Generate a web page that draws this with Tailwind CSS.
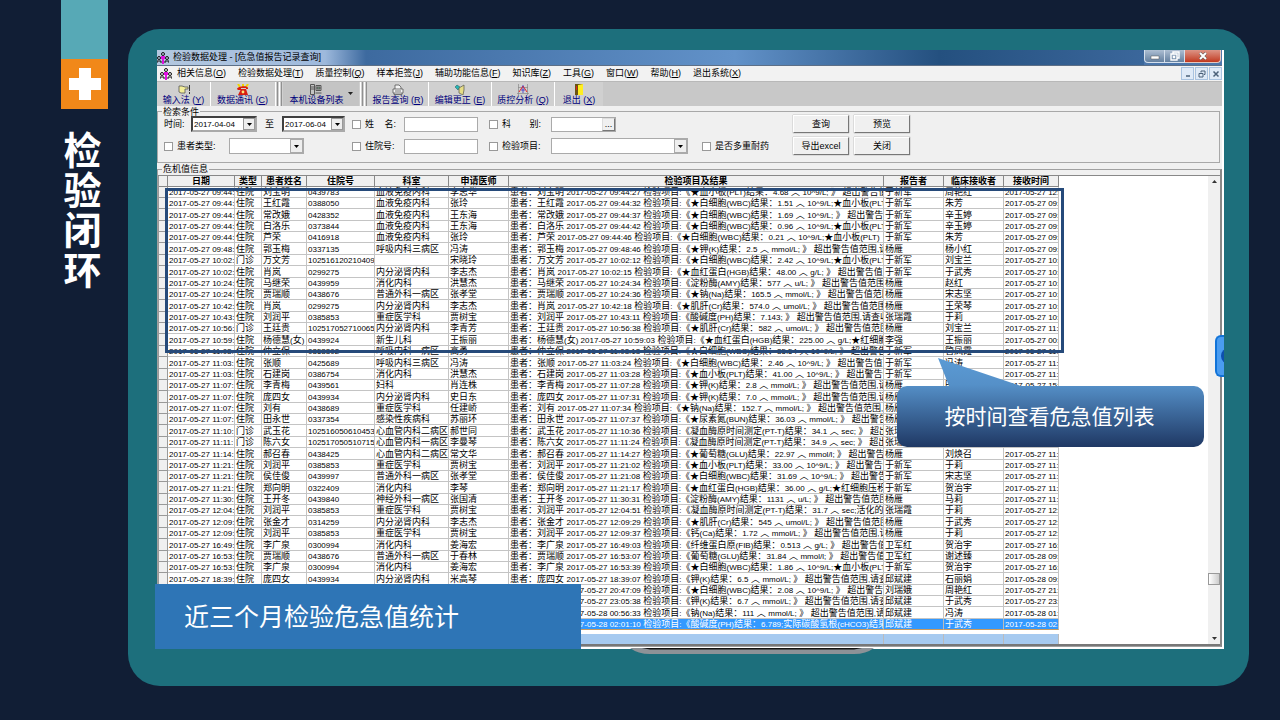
<!DOCTYPE html>
<html lang="zh-CN">
<head>
<meta charset="utf-8">
<title>检验闭环</title>
<script src="https://cdn.jsdelivr.net/npm/@tailwindcss/browser@4"></script>
</head>
<body class="flex min-h-screen bg-[#111e35] font-['Liberation_Sans','Noto_Sans_CJK_SC',sans-serif] text-[9px] leading-[11px] text-black">
<aside class="flex w-32 shrink-0 flex-col items-center pl-[41px]">
  <div class="h-[59px] w-[47px] bg-[#57a9b6]"></div>
  <div class="flex h-[50px] w-[47px] items-center justify-center bg-[#f18819]">
    <svg class="h-8 w-8" viewBox="0 0 32 32" fill="#fff"><path d="M10 0h12v10h10v12H22v10H10V22H0V10h10z"/></svg>
  </div>
  <h1 class="mt-[19px] w-10 -ml-1 text-center font-['Noto_Sans_CJK_SC',sans-serif] text-[38px] leading-10 font-bold text-white">检验闭环</h1>
</aside>

<main class="mt-[29px] mr-[31px] mb-[34px] flex-1 rounded-[32px] bg-[#1d6f7c] pt-[21px] pr-[25px] pb-[37px] pl-[29px]">
<div class="relative">
  <section class="border-r-2 border-b-2 border-white bg-[#f0f0f0]">
    <header class="flex h-[15px] items-center bg-linear-to-r from-[#b9cde6] via-[#3f6ca2] via-35% to-[#4d78ad] pr-px">
      <div class="flex h-full w-[168px] items-center gap-1 bg-linear-to-r from-[#b4c8e0] to-[#9db9dc]">
        <svg class="h-3 w-3 shrink-0" viewBox="0 0 12 12"><g fill="none" stroke="#111"><circle cx="6" cy="2" r="1.5"/><circle cx="2" cy="6" r="1.5"/><circle cx="10" cy="6" r="1.5"/><path d="M0 11V9h4v2M8 11V9h4v2"/></g><path d="M4 4h4v3H7v5H5V7H4z" fill="#e010e0"/></svg>
        <span class="whitespace-nowrap">检验数据处理 - [危急值报告记录查询]</span>
      </div>
      <div class="h-full flex-1 bg-linear-to-r from-[#9db9dc] via-[#3d6a9f] via-10% to-[#6292c9]"></div>
      <div class="h-full flex-1 bg-linear-to-r from-[#6292c9] via-[#24507f] via-50% to-[#3b679b]"></div>
      <div class="flex h-full items-start text-white">
        <button aria-label="最小化" class="flex h-[13px] w-[21px] items-center justify-center rounded-bl-sm border border-t-0 border-[#d5e0ed] bg-linear-to-b from-[#aebfd3] to-[#64809f]"><svg class="h-2 w-3" viewBox="0 0 12 8"><path d="M2 4h8v3H2z" fill="#fff" stroke="#555" stroke-width=".5"/></svg></button>
        <button aria-label="还原" class="flex h-[13px] w-5 items-center justify-center border border-t-0 border-l-0 border-[#d5e0ed] bg-linear-to-b from-[#aebfd3] to-[#64809f]"><svg class="h-[10px] w-[10px]" viewBox="0 0 10 10" fill="none" stroke="#fff" stroke-width="1.4"><path d="M3 3V1h6v6H7"/><path d="M1 3h6v6H1zM3.500 5.500h1v1h-1z"/></svg></button>
        <button aria-label="关闭窗口" class="flex h-[13px] w-9 items-center justify-center rounded-br-sm border border-t-0 border-l-0 border-[#e5c8c0] bg-linear-to-b from-[#dc9486] to-[#c0361c]"><svg class="h-2 w-2" viewBox="0 0 8 8"><path d="M1 1l6 6M7 1L1 7" stroke="#555" stroke-width="3"/><path d="M1 1l6 6M7 1L1 7" stroke="#fff" stroke-width="2"/></svg></button>
      </div>
    </header>

    <nav class="flex h-4 items-center border-t border-[#5d6f86] bg-[#f2f2f2] pl-[3px]">
      <svg class="mr-[5px] h-3 w-3 shrink-0" viewBox="0 0 12 12"><g fill="none" stroke="#111"><circle cx="6" cy="2" r="1.5"/><circle cx="2" cy="6" r="1.5"/><circle cx="10" cy="6" r="1.5"/><path d="M0 11V9h4v2M8 11V9h4v2"/></g><path d="M4 4h4v3H7v5H5V7H4z" fill="#e010e0"/></svg>
      <div class="flex flex-1 gap-3 whitespace-nowrap">
        <a href="#">相关信息(<u>O</u>)</a><a href="#">检验数据处理(<u>T</u>)</a><a href="#">质量控制(<u>Q</u>)</a><a href="#">样本拒签(<u>J</u>)</a><a href="#">辅助功能信息(<u>F</u>)</a><a href="#">知识库(<u>Z</u>)</a><a href="#">工具(<u>G</u>)</a><a href="#">窗口(<u>W</u>)</a><a href="#">帮助(<u>H</u>)</a><a href="#">退出系统(<u>X</u>)</a>
      </div>
      <div class="flex gap-px">
        <button aria-label="子窗口最小化" class="flex h-[13px] w-[13px] items-center justify-center border border-[#a9c3e0] bg-[#dfeaf7]"><svg class="h-2 w-2" viewBox="0 0 8 8"><path d="M2 6h4" stroke="#4a6078" stroke-width="1.5"/></svg></button>
        <button aria-label="子窗口还原" class="flex h-[13px] w-[13px] items-center justify-center border border-[#a9c3e0] bg-[#dfeaf7]"><svg class="h-2 w-2" viewBox="0 0 8 8" fill="none" stroke="#4a6078"><path d="M3 2.500V1h4v3.500H6M1 3.500h4V7H1z"/></svg></button>
        <button aria-label="子窗口关闭" class="flex h-[13px] w-[13px] items-center justify-center border border-[#a9c3e0] bg-[#dfeaf7]"><svg class="h-2 w-2" viewBox="0 0 8 8"><path d="M1.500 1.500l5 5M6.500 1.500l-5 5" stroke="#4a6078" stroke-width="1.500"/></svg></button>
      </div>
    </nav>

    <div class="flex h-[25px] border-t border-[#b8b8b8] bg-[#c8c8c8] whitespace-nowrap text-[#00007c]">
      <button class="flex w-[54px] flex-col items-center border-r border-white bg-[#d0d0d0] pt-[2px]">
        <svg class="h-[11px] w-3" viewBox="0 0 12 11"><path d="M1 2h3l3 1h3v2H7v4H3L1 8z" fill="#f4ef9a" stroke="#555" stroke-width=".8"/><path d="M11.500 1v6M11.500 8v2" stroke="#333"/></svg>
        <span>输入法 (<u>Y</u>)</span></button>
      <button class="flex w-[63px] flex-col items-center bg-[#d0d0d0] pt-[2px]">
        <svg class="h-[11px] w-3" viewBox="0 0 12 11"><path d="M1 0l2 3M6 0v3M11 0L9 3" stroke="#f0d400" stroke-width="2"/><path d="M0 5c0-3 11-4 11-1v1H9V4H4v2H1zM4 5h5l2 6H1z" fill="#d81e10"/><circle cx="6" cy="8" r="1.400" fill="#fbe37a"/></svg>
        <span>数据通讯 (<u>C</u>)</span></button>
      <div class="flex w-[9px] justify-evenly bg-[#d0d0d0]"><i class="w-px bg-white"></i><i class="w-px bg-[#909090]"></i><i class="w-px bg-white"></i><i class="w-px bg-[#909090]"></i></div>
      <button class="flex w-[76px] items-center justify-center gap-1 bg-[#c4c4c4]">
        <span class="flex flex-col items-center pt-px"><svg class="h-[11px] w-3" viewBox="0 0 12 11" fill="none" stroke="#555"><path d="M.5 .5h4v10h-4zM1 3h3M1 5h3M6 1.500h5v5H6zM5.500 9h6"/><path d="M7 3h3v2H7z" fill="#7aa88a"/></svg><span>本机设备列表</span></span>
        <svg class="h-1 w-[5px]" viewBox="0 0 5 4"><path d="M0 0h5L2.500 3z" fill="#222"/></svg></button>
      <div class="flex w-[9px] justify-evenly bg-[#d0d0d0]"><i class="w-px bg-white"></i><i class="w-px bg-[#909090]"></i><i class="w-px bg-white"></i><i class="w-px bg-[#909090]"></i></div>
      <button class="flex w-[61px] flex-col items-center border-r border-white bg-[#d0d0d0] pt-[2px]">
        <svg class="h-[11px] w-3" viewBox="0 0 12 11" fill="#f4f4f4" stroke="#555" stroke-width=".8"><path d="M3 5V1h4l2 2v2M1 5h10v4H1zM2 9v1.500h8V9M3 7h6"/></svg>
        <span>报告查询 (<u>R</u>)</span></button>
      <button class="flex w-[63px] flex-col items-center border-r border-white bg-[#d0d0d0] pt-[2px]">
        <svg class="h-[11px] w-3" viewBox="0 0 12 11"><path d="M1 3l2-2 3 2-2 3z" fill="#27b5b5" stroke="#255" stroke-width=".5"/><path d="M5 4l5-3v5l-1 5-4-2z" fill="#e6dd86" stroke="#665" stroke-width=".8"/></svg>
        <span>编辑更正 (<u>E</u>)</span></button>
      <button class="flex w-[63px] flex-col items-center border-r border-white bg-[#d0d0d0] pt-[2px]">
        <svg class="h-[11px] w-3" viewBox="0 0 12 11" fill="none"><path d="M1.500 0v11M0 9.500h12M10.500 0v11M1 3.500h10" stroke="#888" stroke-width=".7"/><path d="M2 8l4-6 4 6" stroke="#e22"/><path d="M6 1v8M4 6h4" stroke="#33c" stroke-width=".8"/></svg>
        <span>质控分析 (<u>Q</u>)</span></button>
      <button class="flex w-12 flex-col items-center bg-[#d0d0d0] pt-[2px]">
        <svg class="h-[11px] w-3" viewBox="0 0 12 11"><path d="M2 0h8v11H2z" fill="#6b5412"/><path d="M5 1l5-1v11H5z" fill="#ffee20"/><path d="M3 2h1v4H3z" fill="#d22"/></svg>
        <span>退出 (<u>X</u>)</span></button>
    </div>

    <form class="pt-px pr-0.5">
      <fieldset class="h-14 border border-[#a8a8a8] bg-[#f0f0f0]">
        <legend class="ml-1 h-2 px-px leading-[10px]">检索条件</legend>
        <div class="grid grid-cols-[194px_137px_304px_1fr] gap-y-1 whitespace-nowrap">
          <div class="flex h-[18px] items-center pl-[6px]">
            <label for="from" class="w-[27px]">时间:</label>
            <span class="flex h-4 w-[66px] border-2 border-[#404040] border-r-[#aaa] border-b-[#aaa] bg-white"><input id="from" value="2017-04-04" class="w-0 flex-1 pl-px text-[8px] outline-none"><button type="button" aria-label="选择开始日期" class="flex w-3 items-center justify-center border border-[#999] bg-[#eee]"><svg class="h-[3px] w-[5px]" viewBox="0 0 5 3"><path d="M0 0h5L2.500 3z"/></svg></button></span>
            <label for="to" class="w-[25px] pl-2">至</label>
            <span class="flex h-4 w-[63px] border-2 border-[#404040] border-r-[#aaa] border-b-[#aaa] bg-white"><input id="to" value="2017-06-04" class="w-0 flex-1 pl-px text-[8px] outline-none"><button type="button" aria-label="选择结束日期" class="flex w-3 items-center justify-center border border-[#999] bg-[#eee]"><svg class="h-[3px] w-[5px]" viewBox="0 0 5 3"><path d="M0 0h5L2.500 3z"/></svg></button></span>
          </div>
          <div class="flex items-center">
            <input type="checkbox" id="c1" class="mr-1 h-[9px] w-[9px] appearance-none border border-[#999] bg-white"><label for="c1" class="flex w-[31px] justify-between"><span>姓</span><span>名:</span></label>
            <input aria-label="姓名" class="ml-2 h-[15px] w-[74px] border border-[#aaa] bg-white">
          </div>
          <div class="flex items-center">
            <input type="checkbox" id="c2" class="mr-1 h-[9px] w-[9px] appearance-none border border-[#999] bg-white"><label for="c2" class="flex w-[39px] justify-between"><span>科</span><span>别:</span></label>
            <span class="ml-[10px] flex h-[15px] w-[65px] border border-[#aaa] bg-white"><input aria-label="科别" class="w-0 flex-1"><button type="button" class="w-[13px] border border-[#ddd] border-r-[#777] border-b-[#777] bg-[#f0f0f0] leading-[6px]">...</button></span>
          </div>
          <div class="flex items-center gap-[5px]">
            <button type="button" class="h-[18px] w-14 border border-white border-r-[#777] border-b-[#777] bg-[#f0f0f0] shadow-[0_0_1px_#777]">查询</button><button type="button" class="h-[18px] w-14 border border-white border-r-[#777] border-b-[#777] bg-[#f0f0f0] shadow-[0_0_1px_#777]">预览</button>
          </div>

          <div class="flex h-[18px] items-center pl-[6px]">
            <input type="checkbox" id="c3" class="mr-1 h-[9px] w-[9px] appearance-none border border-[#999] bg-white"><label for="c3" class="w-[52px]">患者类型:</label>
            <span class="grid h-4 w-[75px]"><select aria-label="患者类型" class="col-start-1 row-start-1 appearance-none border border-[#aaa] bg-white"><option></option></select><span class="pointer-events-none col-start-1 row-start-1 m-px flex w-[13px] items-center justify-center justify-self-end border border-[#aaa] bg-[#eee]"><svg class="h-[3px] w-[5px]" viewBox="0 0 5 3"><path d="M0 0h5L2.500 3z"/></svg></span></span>
          </div>
          <div class="flex items-center">
            <input type="checkbox" id="c4" class="mr-1 h-[9px] w-[9px] appearance-none border border-[#999] bg-white"><label for="c4" class="w-[31px]">住院号:</label>
            <input aria-label="住院号" class="ml-2 h-[15px] w-[74px] border border-[#aaa] bg-white">
          </div>
          <div class="flex items-center">
            <input type="checkbox" id="c5" class="mr-1 h-[9px] w-[9px] appearance-none border border-[#999] bg-white"><label for="c5" class="w-[39px]">检验项目:</label>
            <span class="ml-[10px] grid h-4 w-[137px]"><select aria-label="检验项目" class="col-start-1 row-start-1 appearance-none border border-[#aaa] bg-white"><option></option></select><span class="pointer-events-none col-start-1 row-start-1 m-px flex w-[13px] items-center justify-center justify-self-end border border-[#aaa] bg-[#eee]"><svg class="h-[3px] w-[5px]" viewBox="0 0 5 3"><path d="M0 0h5L2.500 3z"/></svg></span></span>
            <input type="checkbox" id="c6" class="mr-1 ml-[14px] h-[9px] w-[9px] appearance-none border border-[#999] bg-white"><label for="c6">是否多重耐药</label>
          </div>
          <div class="flex items-center gap-[5px]">
            <button type="button" class="h-[18px] w-14 border border-white border-r-[#777] border-b-[#777] bg-[#f0f0f0] shadow-[0_0_1px_#777]">导出excel</button><button type="button" class="h-[18px] w-14 border border-white border-r-[#777] border-b-[#777] bg-[#f0f0f0] shadow-[0_0_1px_#777]">关闭</button>
          </div>
        </div>
      </fieldset>
    </form>

    <fieldset class="mt-px min-w-0 border border-r-2 border-[#a0a0a0] border-r-[#888]">
      <legend class="ml-1 h-[11px] px-px leading-[11px]">危机值信息</legend>
      <div class="flex border-t border-b-2 border-t-[#888] border-b-[#777] bg-white">
        <table class="w-[901px] table-fixed border-separate border-spacing-0 border-l border-[#999]">
          <colgroup><col class="w-[9px]"><col class="w-[67px]"><col class="w-[27px]"><col class="w-[45px]"><col class="w-[68px]"><col class="w-[74px]"><col class="w-[60px]"><col class="w-[375px]"><col class="w-[60px]"><col class="w-[60px]"><col class="w-[55px]"></colgroup>
          <thead><tr id="head" class="h-[11px] bg-[#f0f0f0]"></tr></thead>
          <tbody id="rows"></tbody>
        </table>
        <div class="flex-1"></div>
        <div class="flex w-3 flex-col items-center bg-[#f0f0f0] pt-1 pb-1">
          <svg class="h-[3px] w-[5px]" viewBox="0 0 5 3"><path d="M0 3h5L2.500 0z" fill="#333"/></svg>
          <div class="flex-1"></div>
          <div class="mb-[52px] h-3 w-3 border border-[#999] bg-linear-to-r from-white to-[#ccc]"></div>
          <svg class="h-[3px] w-[5px]" viewBox="0 0 5 3"><path d="M0 0h5L2.500 3z" fill="#333"/></svg>
        </div>
      </div>
    </fieldset>
  </section>

  <!-- Highlight round the first group of rows -->
  <div class="absolute top-[138px] left-2 h-[165px] w-[899px] border-3 border-[#264a7a]"></div>

  <!-- Speech bubble -->
  <div class="absolute top-[307px] left-[740px] h-[91px] w-[307px]">
    <svg class="absolute inset-0 h-full w-full" viewBox="0 0 307 91"><defs><linearGradient id="bub" x1="0" y1="0" x2="0" y2="1"><stop offset="0" stop-color="#5b9bd5"/><stop offset=".3" stop-color="#5590c8"/><stop offset="1" stop-color="#1f3864"/></linearGradient></defs><path d="M41 1L124 29H297a10 10 0 0 1 10 10V80a10 10 0 0 1-10 10H10a10 10 0 0 1-10-10V39a10 10 0 0 1 10-10H52z" fill="url(#bub)"/></svg>
    <p class="relative pt-11 pr-0.5 text-center font-['Noto_Sans_CJK_SC',sans-serif] text-[21px] leading-7 text-white">按时间查看危急值列表</p>
  </div>

  <!-- Caption banner -->
  <p class="absolute top-[534px] -left-0.5 flex h-[65px] w-[426px] items-center bg-[#2e75b6] pb-1 pl-[29px] font-['Noto_Sans_CJK_SC',sans-serif] text-[25px] leading-8 text-white">近三个月检验危急值统计</p>

  <!-- Side tab and monitor stand -->
  <div class="absolute top-[285px] right-0 h-[42px] w-[9px] overflow-hidden rounded-l-md border-2 border-r-0 border-[#1173d8] bg-[#4a9cf0]"><div class="mt-[11px] ml-1 h-4 w-4 rounded-full bg-[#0d4fae]"></div></div>
  <svg class="absolute top-[598px] left-[473px] h-[6px] w-[244px]" viewBox="0 0 244 6"><path d="M0 0h244q-8 6-20 6H20Q8 6 0 0z" fill="#8d9297"/><path d="M12 0h220l-8 1.500H20z" fill="#111"/></svg>
</div>
</main>

<script>
const heads = ['', '日期', '类型', '患者姓名', '住院号', '科室', '申请医师', '检验项目及结果', '报告者', '临床接收者', '接收时间'];
// time | seconds | type | name | number | department | doctor | result | reporter | receiver | received
const over = '超出警告值范围,请查收';
const data = `27 09:44:|27|住院|刘宝明|0439783|血液免疫内科|李志华|★血小板(PLT)结果：4.68 ︿ 10^9/L; 》 ~|于新军|周艳红|27 12:
27 09:44:|32|住院|王红霞|0388050|血液免疫内科|张玲|★白细胞(WBC)结果：1.51 ︿ 10^9/L;★血小板(PLT)|于新军|朱芳|27 09:
27 09:44:|37|住院|常改娥|0428352|血液免疫内科|王东海|★白细胞(WBC)结果：1.69 ︿ 10^9/L; 》 ~|于新军|辛玉婷|27 09:
27 09:44:|42|住院|白洛乐|0373844|血液免疫内科|王东海|★白细胞(WBC)结果：0.96 ︿ 10^9/L;★血小板(PLT)|于新军|辛玉婷|27 09:
27 09:44:|46|住院|芦荣|0416918|血液免疫内科|张玲|★白细胞(WBC)结果：0.21 ︿ 10^9/L;★血小板(PLT)|于新军|朱芳|27 09:
27 09:48:|46|住院|郭玉梅|0337135|呼吸内科三病区|冯涛|★钾(K)结果：2.5 ︿ mmol/L; 》 ~|杨雁|杨小红|27 09:
27 10:02:|12|门诊|万文芳|102516120210409||宋晓玲|★白细胞(WBC)结果：2.42 ︿ 10^9/L;★血小板(PLT)|于新军|刘宝兰|27 10:
27 10:02:|15|住院|肖岚|0299275|内分泌肾内科|李志杰|★血红蛋白(HGB)结果：48.00 ︿ g/L; 》 ~|于新军|于武秀|27 10:
27 10:24:|34|住院|马继荣|0439959|消化内科|洪慧杰|淀粉酶(AMY)结果：577 ︿ u/L; 》 ~|杨雁|赵红|27 10:
27 10:24:|36|住院|贾瑞顺|0438676|普通外科一病区|张孝堂|★钠(Na)结果：165.5 ︿ mmol/L; 》 ~|杨雁|宋志坚|27 10:
27 10:42:|18|住院|肖岚|0299275|内分泌肾内科|李志杰|★肌肝(Cr)结果：574.0 ︿ umol/L; 》 ~|杨雁|王荣琴|27 10:
27 10:43:|11|住院|刘润平|0385853|重症医学科|贾树宝|酸碱度(PH)结果：7.143; 》 ~|张瑞霞|于莉|27 10:
27 10:56:|38|门诊|王廷贵|102517052710065|内分泌肾内科|李青芳|★肌肝(Cr)结果：582 ︿ umol/L; 》 ~|杨雁|刘宝兰|27 11:
27 10:59:|03|住院|杨德慧(女)|0439924|新生儿科|王振丽|★血红蛋白(HGB)结果：225.00 ︿ g/L;★红细胞|李强|王振丽|27 00:
27 11:03:|13|住院|仲立保|0353302|呼吸内科一病区|高勇|★白细胞(WBC)结果：35.54 ︿ 10^9/L; 》 ~|于新军|管凤霞|27 11:
27 11:03:|24|住院|张顺|0425689|呼吸内科三病区|冯涛|★白细胞(WBC)结果：2.46 ︿ 10^9/L; 》 ~|于新军|冯涛|27 11:
27 11:03:|28|住院|石建岗|0386754|消化内科|洪慧杰|★血小板(PLT)结果：41.00 ︿ 10^9/L; 》 ~|于新军||27 11:
27 11:07:|28|住院|李青梅|0439561|妇科|肖连株|★钾(K)结果：2.8 ︿ mmol/L; 》 ~|杨雁|田娜|27 15:
27 11:07:|31|住院|庞四女|0439934|内分泌肾内科|史日东|★钾(K)结果：7.0 ︿ mmol/L; 》 ~|杨雁||27 11:
27 11:07:|34|住院|刘有|0438689|重症医学科|任建峤|★钠(Na)结果：152.7 ︿ mmol/L; 》 ~|杨雁||27 11:
27 11:07:|37|住院|田永世|0337354|感染性疾病科|苏丽环|★尿素氮(BUN)结果：36.03 ︿ mmol/L; 》 ~|杨雁||27 11:
27 11:10:|36|门诊|武玉花|102516050610453|心血管内科二病区|郝世同|凝血酶原时间测定(PT-T)结果：34.1 ︿ sec; 》 ~|张瑞霞||27 11:
27 11:11:|24|门诊|陈六女|102517050510715|心血管内科一病区|李曼琴|凝血酶原时间测定(PT-T)结果：34.9 ︿ sec; 》 ~|张瑞霞||27 11:
27 11:14:|27|住院|郝召春|0438425|心血管内科二病区|常文华|★葡萄糖(GLU)结果：22.97 ︿ mmol/l; 》 ~|杨雁|刘焕召|27 11:
27 11:21:|02|住院|刘润平|0385853|重症医学科|贾树宝|★血小板(PLT)结果：33.00 ︿ 10^9/L; 》 ~|于新军|于莉|27 11:
27 11:21:|08|住院|侯佳俊|0439997|普通外科一病区|张孝堂|★白细胞(WBC)结果：31.69 ︿ 10^9/L; 》 ~|于新军|宋志坚|27 11:
27 11:21:|17|住院|郑向明|0322409|消化内科|李琴|★血红蛋白(HGB)结果：36.00 ︿ g/L;★红细胞压积|于新军|贺治宇|27 11:
27 11:30:|31|住院|王开冬|0439840|神经外科一病区|张国清|淀粉酶(AMY)结果：1131 ︿ u/L; 》 ~|杨雁|马莉|27 11:
27 12:04:|51|住院|刘润平|0385853|重症医学科|贾树宝|凝血酶原时间测定(PT-T)结果：31.7 ︿ sec;活化的|张瑞霞|于莉|27 12:
27 12:09:|29|住院|张金才|0314259|内分泌肾内科|李志杰|★肌肝(Cr)结果：545 ︿ umol/L; 》 ~|杨雁|于武秀|27 12:
27 12:09:|37|住院|刘润平|0385853|重症医学科|贾树宝|钙(Ca)结果：1.72 ︿ mmol/L; 》 ~|杨雁|于莉|27 12:
27 16:49:|03|住院|李广泉|0300994|消化内科|姜海宏|纤维蛋白原(FIB)结果：0.513 ︿ g/L; 》 ~|卫军红|贺治宇|27 16:
27 16:53:|07|住院|贾瑞顺|0438676|普通外科一病区|于春林|葡萄糖(GLU)结果：31.84 ︿ mmol/l; 》 ~|卫军红|谢述臻|28 09:
27 16:53:|39|住院|李广泉|0300994|消化内科|姜海宏|★白细胞(WBC)结果：1.86 ︿ 10^9/L;★血小板(PLT)|于新军|贺治宇|27 16:
27 18:39:|07|住院|庞四女|0439934|内分泌肾内科|米高琴|钾(K)结果：6.5 ︿ mmol/L; 》 ~|邱斌建|石丽娟|28 09:
27 20:47:|09|住院|李广泉|0300994|消化内科|姜海宏|★白细胞(WBC)结果：2.08 ︿ 10^9/L; 》 ~|刘瑞娥|周艳红|27 21:
27 23:05:|38|住院|庞四女|0439934|内分泌肾内科|米高琴|钾(K)结果：6.7 ︿ mmol/L; 》 ~|邱斌建|于武秀|27 23:
28 00:56:|33|住院|贾瑞顺|0438676|普通外科一病区|于春林|钠(Na)结果：111 ︿ mmol/L; 》 ~|邱斌建|冯涛|28 01:
28 02:01:|10|住院|刘润平|0385853|重症医学科|贾树宝|酸碱度(PH)结果：6.789;实际碳酸氢根(cHCO3)结果|邱斌建|于武秀|28 02:`.split('\n').map(l => l.split('|'));
const latin = s => s.replace(/[\x21-\x7e]+( [\x21-\x7e]+)*/g, m => `<span class="text-[8px] leading-[8px]">${m}</span>`);
document.getElementById('head').innerHTML = heads.map(h => `<th class="overflow-hidden border-r border-b border-[#888] p-0 text-center font-bold leading-[10px] whitespace-nowrap">${h}</th>`).join('');
const cell = (s, edge) => `<td class="overflow-hidden border-r border-b ${edge} py-0 pr-0 pl-px whitespace-nowrap"><div class="h-[10px] leading-[10px]">${latin(s)}</div></td>`;
document.getElementById('rows').innerHTML = data.map((d, i) => {
  const [t, sec, type, name, no, dept, doc, res, rep, rec, at] = d;
  const last = i === data.length - 1;
  const edge = last ? 'border-[#c89a60] border-r-[#bbb]' : 'border-[#c4c4c4]';
  const text = `患者：${name} 2017-05-${t}${sec} 检验项目:《${res.replace('~', over)}`;
  const tall = [2, 5, 7].includes(i % 8);
  return `<tr class="${tall ? 'h-3' : 'h-[11px]'} ${last ? 'bg-[#3399ff] text-white' : ''}"><td class="border-r border-b border-[#999] bg-[#f0f0f0] p-0"></td>` +
    ['2017-05-' + t, type, name, no, dept, doc, text, rep, rec, '2017-05-' + at].map(s => cell(s, edge)).join('') + '</tr>';
}).join('') +
  '<tr class="h-1"><td colspan="11" class="p-0"></td></tr>' +
  '<tr class="h-[10px] bg-[#a6caf0]">' + '<td class="border-r border-[#bbb] p-0"></td>'.repeat(11) + '</tr>';
</script>
</body>
</html>
